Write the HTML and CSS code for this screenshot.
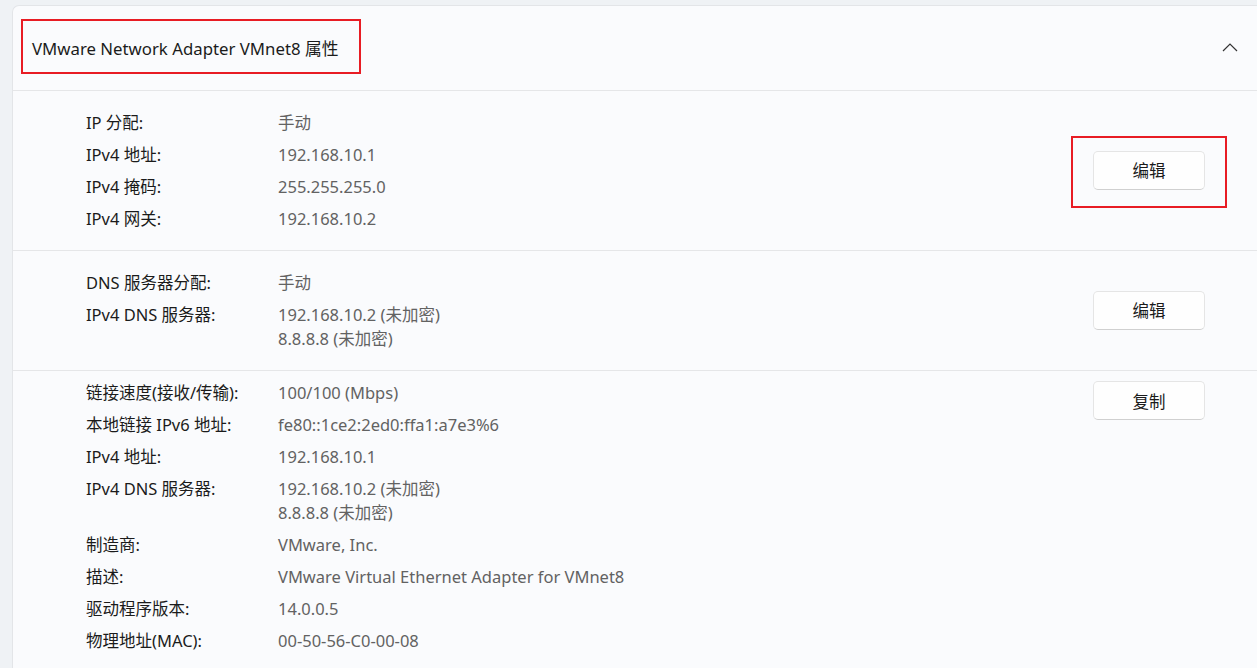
FILE: index.html
```html
<!DOCTYPE html>
<html lang="zh-CN">
<head>
<meta charset="utf-8">
<title>VMware Network Adapter VMnet8 属性</title>
<link rel="stylesheet" href="styles.css">
</head>
<body>
<div class="page">
  <div class="card">
    <div class="header">
      <div class="title">VMware Network Adapter VMnet8 属性</div>
      <svg class="chevron" width="16" height="10" viewBox="0 0 16 10"><path d="M1 9 L8 2 L15 9" fill="none" stroke="#333" stroke-width="1.2"/></svg>
    </div>
    <div class="section">
      <div class="grid">
        <div class="label">IP 分配:</div><div class="value">手动</div>
        <div class="label">IPv4 地址:</div><div class="value">192.168.10.1</div>
        <div class="label">IPv4 掩码:</div><div class="value">255.255.255.0</div>
        <div class="label">IPv4 网关:</div><div class="value">192.168.10.2</div>
      </div>
      <button class="btn">编辑</button>
    </div>
    <div class="section">
      <div class="grid">
        <div class="label">DNS 服务器分配:</div><div class="value">手动</div>
        <div class="label">IPv4 DNS 服务器:</div><div class="value">192.168.10.2 (未加密)<br>8.8.8.8 (未加密)</div>
      </div>
      <button class="btn">编辑</button>
    </div>
    <div class="section top">
      <div class="grid">
        <div class="label">链接速度(接收/传输):</div><div class="value">100/100 (Mbps)</div>
        <div class="label">本地链接 IPv6 地址:</div><div class="value">fe80::1ce2:2ed0:ffa1:a7e3%6</div>
        <div class="label">IPv4 地址:</div><div class="value">192.168.10.1</div>
        <div class="label">IPv4 DNS 服务器:</div><div class="value">192.168.10.2 (未加密)<br>8.8.8.8 (未加密)</div>
        <div class="label">制造商:</div><div class="value">VMware, Inc.</div>
        <div class="label">描述:</div><div class="value">VMware Virtual Ethernet Adapter for VMnet8</div>
        <div class="label">驱动程序版本:</div><div class="value">14.0.0.5</div>
        <div class="label">物理地址(MAC):</div><div class="value">00-50-56-C0-00-08</div>
      </div>
      <button class="btn">复制</button>
    </div>
  </div>
  <div class="mark mark-title"></div>
  <div class="mark mark-edit"></div>
</div>
</body>
</html>
```

FILE: styles.css
```css
* { box-sizing: border-box; }
html, body {
  margin: 0;
  padding: 0;
  background: #eff2f5;
  overflow: hidden;
}
body {
  font-family: "Noto Sans", "Noto Sans CJK SC", sans-serif;
  font-size: 16.5px;
  color: #1b1b1b;
}
.page {
  position: relative;
  width: 1257px;
  height: 668px;
  padding: 5px 0 0 12px;
}
.card {
  width: 1260px;
  background: #fafbfd;
  border: 1px solid #e3e5e8;
  border-right: none;
  border-radius: 7px 0 0 0;
}
.header {
  height: 85px;
  display: flex;
  align-items: center;
  justify-content: space-between;
  padding: 0 34px 0 19px;
  border-bottom: 1px solid #e5e6e8;
}
.title {
  font-size: 16.8px;
  color: #1b1b1b;
}
.chevron { display: block; margin-top: -2px; }
.section {
  display: flex;
  align-items: center;
  justify-content: space-between;
  padding: 20px 67px 19px 73px;
  border-bottom: 1px solid #e5e6e8;
}
.section.top {
  align-items: flex-start;
  padding-top: 10px;
  border-bottom: none;
}
.grid {
  display: grid;
  grid-template-columns: 192px auto;
  row-gap: 8px;
  line-height: 24px;
}
.label { color: #1b1b1b; }
.value { color: #626262; }
.btn {
  width: 112px;
  height: 39px;
  margin-top: -2px;
  background: #fefefe;
  border: 1px solid #e5e5e5;
  border-bottom-color: #d0d0d0;
  border-radius: 5px;
  font: inherit;
  color: #1b1b1b;
  padding: 0;
}
.section.top .btn { margin-top: 0; }
.mark {
  position: absolute;
  border: 2px solid #e81c24;
}
.mark-title { left: 21px; top: 19px; width: 340px; height: 55px; }
.mark-edit { left: 1071px; top: 136px; width: 156px; height: 72px; }
```
